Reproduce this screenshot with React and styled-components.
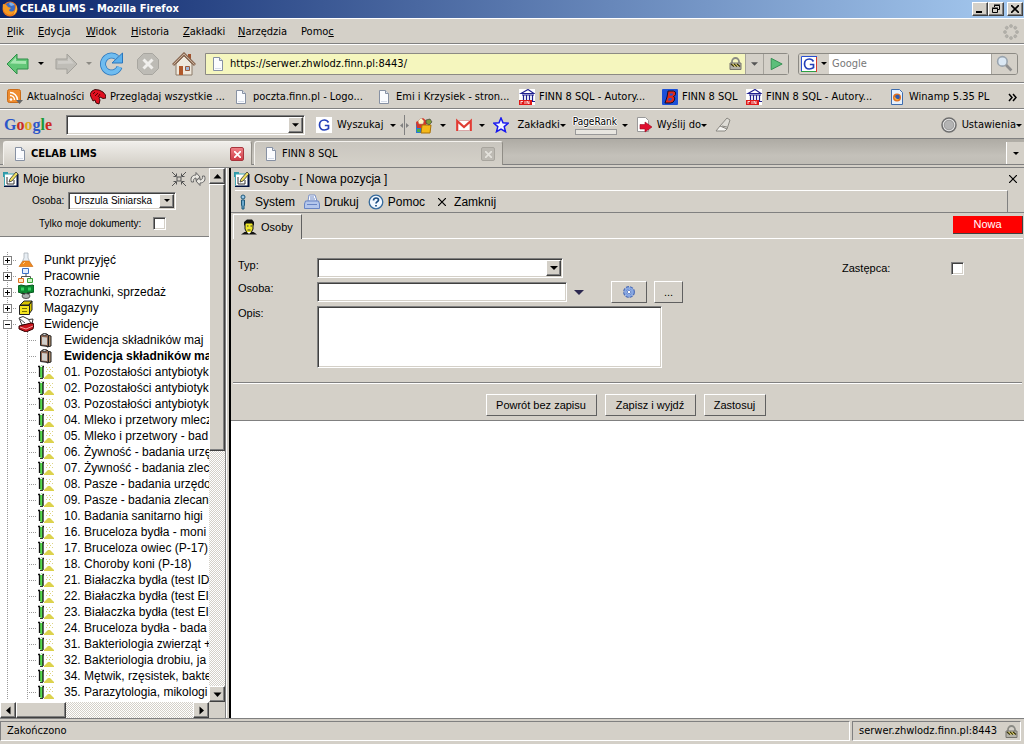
import React from "react";
import styled, { createGlobalStyle, css } from "styled-components";

const FACE = "#d4d0c8";
const UI_FONT = '"DejaVu Sans Condensed", "DejaVu Sans", sans-serif';
const APP_FONT = '"Liberation Sans", Arial, sans-serif';

const GlobalStyle = createGlobalStyle`
  * {
    box-sizing: border-box;
  }
  body {
    margin: 0;
    background: ${FACE};
    color: #000;
    font-family: ${UI_FONT};
    font-size: 11px;
    line-height: 14px;
  }
  button, input, select, textarea {
    font: inherit;
    color: inherit;
    margin: 0;
    padding: 0;
    border-radius: 0;
  }
  a {
    color: inherit;
    text-decoration: none;
  }
  svg {
    display: block;
    flex: none;
  }
`;

const sunken = css`
  border: 1px solid;
  border-color: #808080 #fff #fff #808080;
  box-shadow: inset 1px 1px 0 #404040, inset -1px -1px 0 ${FACE};
`;

const raised = css`
  border: 1px solid;
  border-color: #fff #404040 #404040 #fff;
  box-shadow: inset -1px -1px 0 #808080;
`;

const dots = "repeating-linear-gradient(#999 0 1px, transparent 1px 2px)";
const dotsX = "repeating-linear-gradient(90deg, #999 0 1px, transparent 1px 2px)";

/* ---------- window chrome ---------- */

const Window = styled.div`
  display: flex;
  flex-direction: column;
  height: 100vh;
  overflow: hidden;
`;

const TitleBar = styled.header`
  display: flex;
  align-items: center;
  gap: 2px;
  height: 18px;
  padding: 0 1px 0 2px;
  flex: none;
  color: #fff;
  font-weight: bold;
  background: linear-gradient(90deg, #0a246a, #a6caf0);
  h1 {
    flex: 1;
    margin: 0;
    font-size: 11px;
  }
`;

const CaptionButton = styled.button`
  ${raised}
  display: flex;
  align-items: center;
  justify-content: center;
  width: 16px;
  height: 14px;
  background: ${FACE};
  margin-left: ${(p) => (p.$apart ? "1px" : "-2px")};
`;

const Bar = styled.div`
  display: flex;
  align-items: center;
  flex: none;
  height: ${(p) => p.$height}px;
  padding: ${(p) => p.$pad || "0 7px"};
  border-top: 1px solid #fff;
  border-bottom: 1px solid #808080;
  white-space: nowrap;
  overflow: hidden;
`;

const MenuItem = styled.button`
  border: 0;
  background: none;
  text-align: left;
  width: ${(p) => p.$width}px;
`;

const Spacer = styled.span`
  flex: 1;
`;

const ToolButton = styled.button`
  display: flex;
  align-items: center;
  border: 0;
  background: none;
  gap: ${(p) => p.$gap || 0}px;
  margin-right: ${(p) => p.$after || 0}px;
`;

const UrlBox = styled.div`
  display: flex;
  flex: 1;
  height: 22px;
  border: 1px solid #8c8a84;
  border-radius: 0 3px 3px 0;
  margin-right: 9px;
`;

const UrlField = styled.label`
  display: flex;
  align-items: center;
  flex: 1;
  gap: 4px;
  padding: 0 3px 0 4px;
  background: #f5f6be;
  input {
    flex: 1;
    border: 0;
    background: none;
    outline: 0;
  }
`;

const FieldButton = styled.button`
  display: flex;
  align-items: center;
  justify-content: center;
  gap: 4px;
  border: 0;
  border-left: ${(p) => (p.$first ? "0" : "1px solid #a5a29b")};
  background: ${FACE};
  width: ${(p) => p.$width}px;
`;

const SearchBox = styled.div`
  display: flex;
  width: 220px;
  height: 22px;
  border: 1px solid #8c8a84;
  border-radius: 3px;
  overflow: hidden;
  input {
    flex: 1;
    min-width: 0;
    border: 0;
    padding: 0 3px;
    background: #fff;
  }
  input::placeholder {
    color: #777;
    opacity: 1;
  }
`;

const Bookmark = styled.a`
  display: flex;
  align-items: center;
  gap: 4px;
  width: ${(p) => p.$width}px;
`;

const GoogleLogo = styled.span`
  width: 62px;
  font: bold 16px/20px "Liberation Serif", serif;
  b:nth-child(1), b:nth-child(4) { color: #2c56c8; }
  b:nth-child(2), b:nth-child(6) { color: #cc2a22; }
  b:nth-child(3) { color: #e0a818; }
  b:nth-child(5) { color: #1a9a38; }
`;

const ComboBox = styled.div`
  ${sunken}
  display: grid;
  align-items: stretch;
  width: ${(p) => p.$width}px;
  height: ${(p) => p.$height}px;
  margin-right: ${(p) => p.$after || 0}px;
  padding: 1px;
  background: #fff;
  > select, > input {
    grid-area: 1 / 1;
    min-width: 0;
    width: 100%;
    border: 0;
    outline: 0;
    padding: 0 20px 0 4px;
    background: none;
    appearance: none;
  }
`;

const ComboArrow = styled.span`
  ${raised}
  grid-area: 1 / 1;
  justify-self: end;
  display: flex;
  align-items: center;
  justify-content: center;
  width: 15px;
  background: ${FACE};
  pointer-events: none;
`;

const PageRank = styled.span`
  display: flex;
  flex-direction: column;
  gap: 2px;
  width: 46px;
  margin-right: 3px;
  font: 10px/11px "DejaVu Sans Condensed", sans-serif;
  text-shadow: 1px 0 #fff, -1px 0 #fff, 0 1px #fff, 0 -1px #fff;
  &::after {
    content: "";
    width: 40px;
    height: 4px;
    margin-left: 2px;
    border: 1px solid #999;
    background: #e8e6e0;
  }
`;

const Grip = styled.span`
  display: flex;
  align-items: center;
  gap: 1px;
  height: 20px;
  margin-right: 6px;
  i {
    width: 1px;
    height: 20px;
    background: #808080;
  }
`;

const TabStrip = styled.nav`
  display: flex;
  align-items: flex-end;
  flex: none;
  height: 29px;
  padding: 2px 0 0 3px;
  background: linear-gradient(#aeaba4, #c4c1ba 60%, #bebbb4);
  border-bottom: 1px solid #808080;
  box-shadow: inset 0 -2px 0 ${FACE}, inset 0 -3px 0 #808080;
`;

const BrowserTab = styled.div`
  display: flex;
  align-items: center;
  gap: 3px;
  width: 249px;
  height: 24px;
  margin: 0 2px 2px 0;
  padding: 1px 7px 0 8px;
  border: 1px solid #f4f2ee;
  border-right-color: #908d86;
  border-bottom: 0;
  border-radius: 3px 3px 0 0;
  background: ${(p) => (p.$active ? `linear-gradient(#f0eeea, ${FACE})` : "linear-gradient(#c9c6bf, #d4d0c8)")};
  font-weight: ${(p) => (p.$active ? "bold" : "normal")};
  a {
    flex: 1;
  }
`;

const TabClose = styled.button`
  display: flex;
  align-items: center;
  justify-content: center;
  width: 14px;
  height: 14px;
  border: 1px solid ${(p) => (p.$active ? "#a8343c" : "#a8a59e")};
  border-radius: 2px;
  background: ${(p) => (p.$active ? "linear-gradient(#ef8086, #cf3c46)" : "#bdbab3")};
`;

const AllTabs = styled.button`
  display: flex;
  align-items: center;
  justify-content: center;
  width: 18px;
  height: 22px;
  margin-bottom: 3px;
  border: 0;
  border-left: 1px solid #fff;
  background: ${FACE};
`;

/* ---------- page ---------- */

const Content = styled.div`
  display: flex;
  flex: 1;
  min-height: 0;
  font-family: ${APP_FONT};
  font-size: 12px;
`;

const Sidebar = styled.aside`
  display: grid;
  grid-template-columns: minmax(0, 1fr) 16px;
  grid-template-rows: minmax(0, 1fr) 16px;
  width: 225px;
  flex: none;
`;

const Splitter = styled.div`
  width: 6px;
  flex: none;
  background: ${FACE};
  border-left: 1px solid #808080;
  border-right: 2px solid #000;
  box-shadow: inset 1px 0 0 #fff;
`;

const SidePane = styled.div`
  overflow: hidden;
  background: #fff;
`;

const DeskHeader = styled.div`
  height: 69px;
  background: ${FACE};
  border-bottom: 1px solid #808080;
  font-size: 10px;
`;

const DeskTitle = styled.div`
  display: flex;
  align-items: center;
  gap: 4px;
  height: 22px;
  padding: 0 3px;
  font-size: 12px;
`;

const DeskField = styled.label`
  display: flex;
  align-items: center;
  gap: ${(p) => p.$gap}px;
  height: ${(p) => p.$height}px;
  padding-left: ${(p) => p.$indent}px;
`;

const CheckBox = styled.input.attrs({ type: "checkbox" })`
  ${sunken}
  appearance: none;
  width: 13px;
  height: 13px;
  background: #fff;
`;

const Tree = styled.ul`
  list-style: none;
  margin: 0;
  padding: 15px 0 0;
`;

const TreeRow = styled.li`
  display: flex;
  align-items: center;
  height: 16px;
  padding-left: 3px;
  white-space: nowrap;
  font-weight: ${(p) => (p.$bold ? "bold" : "normal")};
  a {
    margin-left: 10px;
  }
`;

const Branch = styled.span`
  display: flex;
  align-items: center;
  flex: none;
  width: ${(p) => p.$width}px;
  height: 16px;
  background: ${(p) => (p.$through ? "" : `${dotsX} 4px 8px / 9px 1px no-repeat, `)} ${dots} 4px 0 / 1px 100% no-repeat;
`;

const Toggle = styled.button`
  display: flex;
  align-items: center;
  justify-content: center;
  width: 9px;
  height: 9px;
  border: 1px solid #808080;
  background: #fff;
`;

const ScrollTrack = styled.div`
  display: flex;
  flex-direction: ${(p) => (p.$vertical ? "column" : "row")};
  justify-content: space-between;
  background: repeating-conic-gradient(#fff 0 25%, ${FACE} 0 50%) 0 0 / 2px 2px;
`;

const ScrollButton = styled.button`
  ${raised}
  display: flex;
  align-items: center;
  justify-content: center;
  width: 16px;
  height: 16px;
  flex: none;
  background: ${FACE};
`;

const Thumb = styled.div`
  ${raised}
  background: ${FACE};
  flex: 0 0 ${(p) => p.$size};
  margin: ${(p) => (p.$vertical ? "0 0 auto" : "0 auto 0 0")};
`;

const Main = styled.main`
  flex: 1;
  min-width: 0;
  background: #fff;
`;

const Form = styled.form`
  background: ${FACE};
  border-bottom: 1px solid #808080;
`;

const FormTitle = styled.div`
  display: flex;
  align-items: center;
  gap: 4px;
  height: 21px;
  padding: 1px 7px 0 3px;
`;

const CloseX = styled.button`
  border: 0;
  background: none;
`;

const Commands = styled.div`
  display: flex;
  align-items: center;
  height: 24px;
  padding: 1px 16px 0 4px;
  border-bottom: 1px solid #808080;
  > div {
    display: flex;
    align-items: center;
    flex: 1;
    gap: 9px;
    height: 23px;
    border-top: 1px solid #fff;
    border-right: 1px solid #808080;
  }
`;

const Command = styled.button`
  display: flex;
  align-items: center;
  gap: ${(p) => p.$gap || 4}px;
  margin-left: ${(p) => p.$before || 0}px;
  border: 0;
  background: none;
`;

const FormTabs = styled.div`
  display: flex;
  align-items: stretch;
  height: 26px;
  padding: 1px 1px 0 2px;
`;

const FormTab = styled.button`
  display: flex;
  align-items: center;
  gap: 4px;
  width: 69px;
  padding: 0 0 0 7px;
  border: 1px solid #fff;
  border-right: 1px solid #606060;
  border-bottom: 0;
  background: none;
  font-size: 11px;
`;

const TabRest = styled.div`
  display: flex;
  justify-content: flex-end;
  align-items: flex-start;
  flex: 1;
  padding-top: 2px;
  border-bottom: 1px solid #fff;
`;

const StateBadge = styled.strong`
  width: 70px;
  height: 18px;
  border-right: 1px solid #404040;
  border-bottom: 1px solid #404040;
  background: #f00;
  color: #fff;
  font-size: 11px;
  font-weight: normal;
  line-height: 17px;
  text-align: center;
`;

const Fields = styled.div`
  display: grid;
  grid-template-columns: 79px minmax(0, 1fr);
  row-gap: 3px;
  padding: 19px 60px 14px 7px;
  font-size: 11px;
`;

const FieldRow = styled.div`
  display: flex;
  align-items: center;
  gap: 7px;
  min-height: 20px;
`;

const CheckLabel = styled.label`
  width: 102px;
  margin-left: auto;
`;

const TextBox = styled.input`
  ${sunken}
  width: 250px;
  height: 20px;
  padding: 0 4px;
  background: #fff;
`;

const TextArea = styled.textarea`
  ${sunken}
  display: block;
  width: 345px;
  height: 62px;
  background: #fff;
  resize: none;
`;

const PushButton = styled.button`
  display: flex;
  align-items: center;
  justify-content: center;
  width: ${(p) => p.$width}px;
  height: 22px;
  border: 1px solid;
  border-color: #fff #606060 #606060 #fff;
  background: ${FACE};
`;

const Lookup = styled.button`
  display: flex;
  border: 0;
  background: none;
  margin-right: 20px;
`;

const Actions = styled.div`
  display: flex;
  justify-content: center;
  gap: 8px;
  margin: 0 2px;
  padding: 11px 4px 4px 0;
  border-top: 1px solid #808080;
  box-shadow: inset 0 1px 0 #fff;
  font-size: 11px;
`;

const StatusBar = styled.footer`
  display: flex;
  align-items: center;
  gap: 2px;
  flex: none;
  height: 26px;
  padding: 2px 3px 3px 0;
  border-top: 1px solid #808080;
`;

const StatusCell = styled.div`
  display: flex;
  align-items: center;
  justify-content: space-between;
  flex: ${(p) => (p.$width ? `0 0 ${p.$width}px` : 1)};
  height: 20px;
  padding: 0 2px 0 6px;
  border: 1px solid;
  border-color: #808080 #fff #fff #808080;
`;

/* ---------- icons ---------- */

const Svg = ({ size = 16, w, h, box = "0 0 16 16", children }) => (
  <svg width={w || size} height={h || size} viewBox={box} fill="none" aria-hidden="true">
    {children}
  </svg>
);

const Caret = ({ color = "#000", size = 6 }) => (
  <Svg w={size} h={Math.ceil(size / 2)} box="0 0 10 5">
    <path d="M0 0h10L5 5z" fill={color} />
  </Svg>
);

const Arrow = ({ turn }) => (
  <Svg size={9} box="0 0 9 9">
    <path d="M0.500 6.500h8L4.500 2z" fill="#000" transform={`rotate(${turn} 4.500 4.500)`} />
  </Svg>
);

const PageIcon = () => (
  <Svg>
    <path d="M3.500 1.500h6l3 3v10h-9z" fill="#fbfcff" stroke="#8791a3" />
    <path d="M9.500 1.500v3h3" fill="#dfe5ef" stroke="#8791a3" />
    <path d="M5 12.500h6" stroke="#d4dbe8" />
  </Svg>
);

const FirefoxIcon = () => (
  <Svg>
    <circle cx="8" cy="8" r="7.500" fill="#e8731a" />
    <circle cx="8" cy="6.500" r="5" fill="#3c6cc4" />
    <path d="M8 1.500c2 0 3.500 1 4.500 2.500L9 5 7 3z" fill="#7fb2ec" />
    <path d="M1 3c2 0 4 1 5 3l3 1-2 2c1 2 4 2 6 0-1 4-4 5.500-7 4.500C2 12 0 8 1 3z" fill="#f49a24" />
    <path d="M14 4c1.500 3 1 8-3 10 2-3 3-6 3-10z" fill="#ffd24a" />
  </Svg>
);

const NavArrow = ({ forward }) => (
  <Svg size={24} box="0 0 24 24">
    <g transform={forward ? "matrix(-1 0 0 1 24 0)" : undefined}>
      <path
        d="M1 12 11 2v5h11v10H11v5z"
        fill={forward ? "#bfbdb7" : "#63c778"}
        stroke={forward ? "#a3a19b" : "#2f8f48"}
        strokeLinejoin="round"
      />
      <path d="M4 11.500 10 5v4h10v3z" fill={forward ? "#cfcdc8" : "#a6e6b0"} />
    </g>
  </Svg>
);

const ReloadIcon = () => (
  <Svg size={24} box="0 0 24 24">
    <path d="M19.500 15A8.500 8.500 0 1 1 17 5.500" stroke="#2a76bd" strokeWidth="6" />
    <path d="M19.500 15A8.500 8.500 0 1 1 17 5.500" stroke="#6fbcf0" strokeWidth="4.400" />
    <path d="M22.500 1v10H12z" fill="#5cb0ec" stroke="#2a76bd" strokeLinejoin="round" />
  </Svg>
);

const StopIcon = () => (
  <Svg size={24} box="0 0 24 24">
    <path d="M7.500 1.500h9l6 6v9l-6 6h-9l-6-6v-9z" fill="#bdbbb5" stroke="#a8a6a0" />
    <path d="m7.500 7.500 9 9m0-9-9 9" stroke="#f0efec" strokeWidth="3" />
  </Svg>
);

const HomeIcon = () => (
  <Svg size={24} box="0 0 24 24">
    <path d="M16 2h3v6h-3z" fill="#a0522d" />
    <path d="M4 12v11h16V12l-8-8z" fill="#efe8dc" stroke="#8c7a68" />
    <path d="M1 13 12 2l11 11" stroke="#8b6a54" strokeWidth="3" />
    <path d="M1.500 12.500 12 2l10.500 10.500" stroke="#c9b09a" />
    <path d="M7 14h4v9H7z" fill="#b0582a" />
    <path d="M13.500 14.500h4v4h-4z" fill="#9db6d8" stroke="#9a5a3a" />
  </Svg>
);

const LockIcon = () => (
  <Svg size={13} box="0 0 13 13">
    <path d="M3 7V4.500a3.500 3.500 0 0 1 7 0V7" stroke="#8a8a84" strokeWidth="1.800" />
    <path d="M1 6h11v6.500H1z" fill="#b4b2a8" stroke="#77756e" />
    <path d="m2 7 3 2.500M5 7l3 2.500M8 7l3 2.500" stroke="#3a3410" strokeWidth="1.500" />
    <path d="m3.500 7 3 2.500m0-2.500 3 2.500" stroke="#e8d850" />
  </Svg>
);

const GoIcon = () => (
  <Svg size={14}>
    <path d="M2.500 1.500v13L15 8z" fill="#5cbf7a" stroke="#2c8a4c" strokeLinejoin="round" />
  </Svg>
);

const GIcon = ({ plain }) => (
  <Svg>
    <path d="M0 0h16v16H0z" fill="#fff" />
    {!plain && (
      <>
        <path d="M.5 16V.5H16" stroke="#2a4fd0" />
        <path d="M15.500 1v15" stroke="#d83a2c" />
        <path d="M0 15.500h15" stroke="#2ea043" />
      </>
    )}
    <path d="M12.500 5.500C11.500 3.500 10 3 8.300 3 5.500 3 3.500 5.200 3.500 8s2 5 4.800 5c1.700 0 3.200-.5 4.200-1.300V8.500H8.800" stroke="#2440b8" strokeWidth="1.700" />
  </Svg>
);

const SearchIcon = () => (
  <Svg size={17}>
    <circle cx="6" cy="6" r="4.500" fill="#dbe8f4" stroke="#9aa4ae" strokeWidth="1.500" />
    <path d="m9.500 9.500 5 5" stroke="#8e8e8e" strokeWidth="2.600" />
  </Svg>
);

const ThrobberIcon = () => (
  <Svg>
    {[0, 45, 90, 135, 180, 225, 270, 315].map((a) => (
      <circle key={a} cx="8" cy="2" r="1.500" fill="#b4b2ac" stroke="#a09e98" strokeWidth=".5" transform={`rotate(${a} 8 8)`} />
    ))}
  </Svg>
);

const RssIcon = () => (
  <Svg>
    <rect x=".5" y=".5" width="13" height="13" rx="2" fill="#ee8c30" stroke="#c96c1a" />
    <circle cx="4" cy="10.500" r="1.300" fill="#fff" />
    <path d="M3 6.500a4.500 4.500 0 0 1 4.500 4.500M3 3.500a7.500 7.500 0 0 1 7.500 7.500" stroke="#fff" strokeWidth="1.500" />
    <path d="M9 11h7l-3.500 4z" fill="#666" />
  </Svg>
);

const RedHeadIcon = () => (
  <Svg>
    <path d="m0 5 2-3 3-1.500 4 .5 4 2 2.500 3 .5 3-3 .5-3-1.500-1 1 1 2-1 4-3-1-1-3-2 1-2-4z" fill="#e01020" stroke="#300" strokeWidth=".9" />
    <path d="m3 5 2-2m0 4 3-3m0 4 2-3" stroke="#500" />
  </Svg>
);

const FinnIcon = () => (
  <Svg>
    <path d="M0 0h16v16H0z" fill="#fff" />
    <path d="m2 4.500 7-4 6 4zM3 6h12M4.500 6v6m3-6v6m3-6v6m3-6v6M2 12.500h14" stroke="#202090" strokeWidth="1.200" />
    <path d="M0 11h13v5H0z" fill="#e01818" />
    <path d="M2 12.500h2M2 12v3m4-3v3m2 0v-3l2 3v-3" stroke="#fff" strokeWidth=".8" />
  </Svg>
);

const BlueBIcon = () => (
  <Svg>
    <rect width="16" height="16" rx="1" fill="#1c50d8" />
    <path d="M6 2h5.500q3 .5 2 3.500-.5 1.500-2 2 2 1 1 3.500-1 3-4 3H3l1-3 1-3z" fill="#e02818" stroke="#101030" />
    <path d="M8 4.500h3l-.5 2H7.500zM6.800 9h3l-.6 2.500H6z" fill="#1c50d8" />
  </Svg>
);

const WinampIcon = () => (
  <Svg>
    <path d="M2.500.5h8l3 3v12h-11z" fill="#e6f0fc" stroke="#3e6cae" />
    <circle cx="8" cy="8.500" r="4" fill="#e07020" />
    <circle cx="8.500" cy="8" r="2.300" fill="#2e5cb0" />
    <path d="M5 8c2 0 2 3 5 2-1 2-4 2-5-2z" fill="#f6b040" />
  </Svg>
);

const NewsIcon = () => (
  <Svg w={18} h={17} box="0 0 18 17">
    <path d="M1 6h8v10H1z" fill="#2878d8" />
    <path d="M1 5 8 1l5 4-4 6H2z" fill="#d83828" />
    <path d="m3 4 3-3 3 3-1 3H4z" fill="#fff4c0" stroke="#a88" strokeWidth=".5" />
    <path d="M7 8h9l-1 8H6z" fill="#f4b818" stroke="#a87008" />
    <path d="m11 3 4-1 2 3-3 3-3-2z" fill="#7d9c3a" stroke="#444" strokeWidth=".7" />
    <path d="M2 12h3v3H2z" fill="#48b048" />
  </Svg>
);

const GmailIcon = () => (
  <Svg>
    <path d="M0 3h16v11H0z" fill="#fff" />
    <path d="M1.200 14V4L8 10l6.800-6v10" stroke="#e03c34" strokeWidth="2.200" />
    <path d="M2 13.500h12M2 3.500h12" stroke="#d8a8a8" />
  </Svg>
);

const StarIcon = () => (
  <Svg>
    <path d="m8 1 2 4.800 5.200.4-4 3.400 1.300 5.100L8 12l-4.500 2.700 1.300-5.100-4-3.400L6 5.800z" fill="#f4f6ff" stroke="#1818f0" strokeWidth="1.500" />
  </Svg>
);

const SendIcon = () => (
  <Svg>
    <path d="M1.500.5h8l3 3v11h-11z" fill="#fff" stroke="#999" />
    <path d="M4 7.500h5V5l7 5-7 5v-3H4z" fill="#e01030" stroke="#a00820" strokeWidth=".6" />
  </Svg>
);

const MarkerIcon = () => (
  <Svg>
    <path d="m5 9 7-8 3 2-3 9-6 1z" fill="#dedcd6" stroke="#8a8882" />
    <path d="m5 9-4 5h9l2-2z" fill="#f4f3f0" stroke="#8a8882" />
    <path d="m7 9 5 1" stroke="#8a8882" />
  </Svg>
);

const KnobIcon = () => (
  <Svg>
    <circle cx="8" cy="8" r="7" fill="#e8e8e8" stroke="#6e6e6e" strokeWidth="1.500" />
    <circle cx="8" cy="8" r="4.800" fill="#b4b4b4" stroke="#999" />
  </Svg>
);

const EditIcon = () => (
  <Svg>
    <path d="M0 1h5v5H0z" fill="#2f98a8" />
    <path d="M2 3h12v12.500H2z" fill="#fff" />
    <path d="M14.500 3v12.500H1" stroke="#00103c" strokeWidth="2" />
    <path d="M1.500 15V3H12" stroke="#3fa8b4" />
    <path d="M4 6v7h7V9" stroke="#333" />
    <path d="m6 11 1-3 6-7 2 2-6 7z" fill="#f0e060" stroke="#333" strokeWidth=".8" />
  </Svg>
);

const CollapseIcon = () => (
  <Svg size={14} box="0 0 14 14">
    <path d="M5 5h4v4H5zM0 0l4 4m10-4-4 4M0 14l4-4m10 4-4-4" stroke="#555" />
    <path d="M4.500 1.500v3h-3m8-3v3h3m-11 5h3v3m8-3h-3v3" stroke="#555" />
  </Svg>
);

const RefreshIcon = () => (
  <Svg>
    <path d="M1.500 11C0 7 2 4 6 4V1.500L10 6 6 9.500V7C4 7 3 9 3.500 11z" fill="#e8e6e0" stroke="#666" />
    <path d="M14.500 5c1.500 4-.5 7-4.500 7v2.500L6 10l4-3.500V9c2 0 3-2 2.500-4z" fill="#e8e6e0" stroke="#666" />
  </Svg>
);

const FlaskIcon = () => (
  <Svg>
    <path d="M6 1h4v5l4 8H2l4-8z" fill="#e8eef4" stroke="#a8b0b8" strokeWidth=".8" />
    <path d="M5 9h6l4 5.500H1z" fill="#f08a20" stroke="#d06c10" strokeWidth=".6" />
    <path d="m5 12 2-2" stroke="#ffd090" />
  </Svg>
);

const LabsIcon = () => (
  <Svg>
    <path d="M8 6v3M3.500 11V8.500h9V11" stroke="#555" />
    <path d="M4.500.5h6v5h-6z" fill="#e6f0ff" stroke="#3c70c8" />
    <path d="M.5 10.500h5v4h-5z" fill="#ffe4c0" stroke="#e07020" />
    <path d="M9.500 10.500h5v4h-5z" fill="#d0f4c8" stroke="#38a038" />
  </Svg>
);

const MoneyIcon = () => (
  <Svg>
    <path d="m0 2 3-1 5 1 7-1 1 1v6l-5 1-3 3-5-3-3-1z" fill="#0c8a30" stroke="#04541c" />
    <path d="M3 3.500h3v3H3zm7 0h3v3h-3z" fill="#38d060" />
    <ellipse cx="8" cy="12" rx="4" ry="2.500" fill="#aab0b0" stroke="#555" />
    <path d="m4 9 3 1m2-1 3 0" stroke="#222" />
  </Svg>
);

const BoxIcon = () => (
  <Svg>
    <path d="m2 5 4-4h8l-3 4zM11 5l3-4v9l-3 4z" fill="#d8c400" stroke="#222" />
    <path d="M1.500 5.500h10v9h-10z" fill="#f4e420" stroke="#222" />
    <path d="M4 8.500h5m-5 3h5" stroke="#777000" />
  </Svg>
);

const RecordsIcon = () => (
  <Svg>
    <path d="m1 2 4-1.500 6 3L15 3l-1 5-10 1z" fill="#fff" stroke="#222" strokeWidth=".9" />
    <path d="m2 3 5 4m3-4 3 4" stroke="#555" />
    <path d="m1 10 12-3 3 1-1 5-7 3-7-3z" fill="#c8141c" stroke="#300" />
    <path d="m2 11 6 2 7-3" stroke="#f4a0a0" />
  </Svg>
);

const ClipboardIcon = () => (
  <Svg>
    <path d="m9 3 4 1v10l-4 1z" fill="#b08c68" stroke="#222" />
    <path d="M2.500 3.500 5 2h4l1.500 1.500v11l-8-1z" fill="#8a6450" stroke="#222" />
    <path d="m4 5 5 .5V13l-5-.5z" fill="#d0ceca" />
    <path d="M5 1.500h3v2H5z" fill="#ccc" stroke="#333" strokeWidth=".7" />
  </Svg>
);

const SampleIcon = () => (
  <Svg>
    <path d="M2 3h3v10l-1.500 2L2 13z" fill="#58dc50" />
    <path d="M0 2.500h1.500V13M5 14V2.500h1" stroke="#111" strokeWidth="1.300" />
    <path d="M2 14.500h3" stroke="#333" />
    <path d="M3 1.500h1" stroke="#9ae890" />
    <path d="M6 15v-1l2-2 2-2h2l2 2 2 2v1z" fill="#dcd24c" />
    <path d="M8 3.500h1m2 0h1m2 0h1m-6 2h1m2 0h1m-5 2h1m2 0h1m2 0h1" stroke="#dcd480" />
  </Svg>
);

const PersonIcon = () => (
  <Svg>
    <circle cx="8" cy="3" r="2" fill="#9cc8e8" stroke="#1e5878" />
    <path d="M6.500 6h3v5.500h-.5V15H7v-3.500h-.5z" fill="#6ca8cc" stroke="#1e5878" />
  </Svg>
);

const PrinterIcon = () => (
  <Svg>
    <path d="M4 7 5 1h6l2 6z" fill="#fff" stroke="#7890c8" />
    <path d="M1.500 7h13l1 3v4.500H.5V10z" fill="#b4c6ec" stroke="#6884c4" />
    <path d="M3 10.500h10M6 3h4M6 5h5" stroke="#6884c4" />
  </Svg>
);

const HelpIcon = () => (
  <Svg>
    <circle cx="8" cy="8" r="6.800" fill="#f2f8ff" stroke="#356a9c" strokeWidth="1.300" />
    <path d="M5.500 6.500c0-3.500 5-3 5-.5 0 1.600-2.500 1.700-2.500 3.500M8 11v1.600" stroke="#174a80" strokeWidth="1.700" />
  </Svg>
);

const FaceIcon = () => (
  <Svg>
    <path d="M0 15.500 3.500 13h9l3.500 2.500z" fill="#111" />
    <path d="M4 4h8v6l-2 4H6l-2-4z" fill="#f0e828" stroke="#111" />
    <path d="M3 7V3l3-2.500h5L13 3v4l-2-3H5z" fill="#111" />
    <path d="M6 7h1.500m2 0H11m-4.500 4h3" stroke="#333" />
    <path d="m6 13 2 2 2-2z" fill="#fff" />
  </Svg>
);

const GearIcon = () => (
  <Svg size={14}>
    <circle cx="8" cy="8" r="5" fill="#a8c4f0" stroke="#4a6ab4" strokeWidth="3.600" strokeDasharray="3 1" />
    <circle cx="8" cy="8" r="4.500" stroke="#88a8e4" strokeWidth="2" />
    <circle cx="8" cy="8" r="2" fill="#fff" stroke="#5878c0" />
  </Svg>
);

const Cross = ({ color = "#000", size = 8, stroke = 1.2 }) => (
  <Svg size={size} box="0 0 8 8">
    <path d="m0 0 8 8m0-8L0 8" stroke={color} strokeWidth={stroke} />
  </Svg>
);

/* ---------- data ---------- */

const menus = [
  ["", "P", "lik", 31],
  ["", "E", "dycja", 48],
  ["", "W", "idok", 45],
  ["", "H", "istoria", 52],
  ["", "Z", "akładki", 55],
  ["", "N", "arzędzia", 63],
  ["Pomo", "c", "", 40],
];

const bookmarks = [
  { icon: RssIcon, title: "Aktualności", width: 83 },
  { icon: RedHeadIcon, title: "Przeglądaj wszystkie ...", width: 143 },
  { icon: PageIcon, title: "poczta.finn.pl - Logo...", width: 143 },
  { icon: PageIcon, title: "Emi i Krzysiek - stron...", width: 143 },
  { icon: FinnIcon, title: "FINN 8 SQL - Autory...", width: 143 },
  { icon: BlueBIcon, title: "FINN 8 SQL", width: 84 },
  { icon: FinnIcon, title: "FINN 8 SQL - Autory...", width: 143 },
  { icon: WinampIcon, title: "Winamp 5.35 PL", width: 110 },
];

const modules = [
  { icon: FlaskIcon, title: "Punkt przyjęć" },
  { icon: LabsIcon, title: "Pracownie" },
  { icon: MoneyIcon, title: "Rozrachunki, sprzedaż" },
  { icon: BoxIcon, title: "Magazyny" },
  { icon: RecordsIcon, title: "Ewidencje", open: true },
];

const records = [
  { icon: ClipboardIcon, title: "Ewidencja składników maj" },
  { icon: ClipboardIcon, title: "Ewidencja składników ma", bold: true },
  ...[
    "01. Pozostałości antybiotyk",
    "02. Pozostałości antybiotyk",
    "03. Pozostałości antybiotyk",
    "04. Mleko i przetwory mlecz",
    "05. Mleko i przetwory - bad",
    "06. Żywność - badania urzę",
    "07. Żywność - badania zlec",
    "08. Pasze - badania urzędo",
    "09. Pasze - badania zlecan",
    "10. Badania sanitarno higi",
    "16. Bruceloza bydła - moni",
    "17. Bruceloza owiec (P-17)",
    "18. Choroby koni (P-18)",
    "21. Białaczka bydła (test ID",
    "22. Białaczka bydła (test EI",
    "23. Białaczka bydła (test EI",
    "24. Bruceloza bydła - bada",
    "31. Bakteriologia zwierząt +",
    "32. Bakteriologia drobiu, ja",
    "34. Mętwik, rzęsistek, bakte",
    "35. Parazytologia, mikologi",
  ].map((title) => ({ icon: SampleIcon, title })),
];

/* ---------- sections ---------- */

function BrowserChrome() {
  return (
    <>
      <TitleBar>
        <FirefoxIcon />
        <h1>CELAB LIMS - Mozilla Firefox</h1>
        <CaptionButton aria-label="Minimalizuj" $apart>
          <Svg size={8} box="0 0 8 8"><path d="M0 7h6" stroke="#000" strokeWidth="2" /></Svg>
        </CaptionButton>
        <CaptionButton aria-label="Przywróć">
          <Svg size={10} box="0 0 10 10"><path d="M3.500 3V1.500h5v4H7M3 1h6M1.500 4.500h5v4h-5zM1 4h6" stroke="#000" /></Svg>
        </CaptionButton>
        <CaptionButton aria-label="Zamknij" $apart>
          <Cross stroke={1.6} />
        </CaptionButton>
      </TitleBar>

      <Bar $height={26} $pad="2px 5px 0 7px">
        {menus.map(([before, key, after, width]) => (
          <MenuItem key={before + key + after} $width={width}>{before}<u>{key}</u>{after}</MenuItem>
        ))}
        <Spacer />
        <ThrobberIcon />
      </Bar>

      <Bar $height={39} $pad="0 6px 0 6px">
        <ToolButton aria-label="Wstecz" $gap={8} $after={10}><NavArrow /><Caret /></ToolButton>
        <ToolButton aria-label="Do przodu" $gap={8} $after={8}><NavArrow forward /><Caret color="#8c8a84" /></ToolButton>
        <ToolButton aria-label="Odśwież" $after={12}><ReloadIcon /></ToolButton>
        <ToolButton aria-label="Zatrzymaj" $after={12}><StopIcon /></ToolButton>
        <ToolButton aria-label="Strona startowa" $after={9}><HomeIcon /></ToolButton>
        <UrlBox>
          <UrlField>
            <PageIcon />
            <input aria-label="Adres" defaultValue="https://serwer.zhwlodz.finn.pl:8443/" />
            <LockIcon />
          </UrlField>
          <FieldButton $width={18} aria-label="Historia adresów"><Caret size={7} color="#555" /></FieldButton>
          <FieldButton $width={25} aria-label="Przejdź"><GoIcon /></FieldButton>
        </UrlBox>
        <SearchBox>
          <FieldButton $first $width={30} aria-label="Wyszukiwarka"><GIcon /><Caret /></FieldButton>
          <input placeholder="Google" aria-label="Szukaj" />
          <FieldButton $width={26} aria-label="Szukaj"><SearchIcon /></FieldButton>
        </SearchBox>
      </Bar>

      <Bar $height={26} $pad="2px 7px 0 7px">
        {bookmarks.map(({ icon: Icon, title, width }, i) => (
          <Bookmark href="#" key={i} $width={width}><Icon />{title}</Bookmark>
        ))}
        <Spacer />
        <ToolButton aria-label="Więcej zakładek">
          <Svg size={9} box="0 0 9 9"><path d="m1 1 3 3.500L1 8m4-7 3 3.500L5 8" stroke="#000" strokeWidth="1.500" /></Svg>
        </ToolButton>
      </Bar>

      <Bar $height={30} $pad="2px 2px 0 4px">
        <GoogleLogo aria-label="Google"><b>G</b><b>o</b><b>o</b><b>g</b><b>l</b><b>e</b></GoogleLogo>
        <ComboBox $width={239} $height={20} $after={11}>
          <input aria-label="Szukaj w Google" />
          <ComboArrow><Caret size={7} /></ComboArrow>
        </ComboBox>
        <ToolButton $gap={5} $after={7}><GIcon plain />Wyszukaj</ToolButton>
        <ToolButton aria-label="Opcje wyszukiwania" $after={4}><Caret /></ToolButton>
        <Grip>
          <Svg w={3} h={5} box="0 0 3 5"><path d="M3 0v5L0 2.500z" fill="#808080" /></Svg>
          <i />
          <Svg w={3} h={5} box="0 0 3 5"><path d="M0 0v5l3-2.500z" fill="#808080" /></Svg>
        </Grip>
        <ToolButton aria-label="Wiadomości" $gap={7} $after={10}><NewsIcon /><Caret /></ToolButton>
        <ToolButton aria-label="Gmail" $gap={7} $after={8}><GmailIcon /><Caret /></ToolButton>
        <ToolButton $gap={8}><StarIcon />Zakładki</ToolButton>
        <ToolButton aria-label="Lista zakładek" $after={7}><Caret /></ToolButton>
        <PageRank>PageRank</PageRank>
        <ToolButton aria-label="Opcje PageRank" $after={8}><Caret /></ToolButton>
        <ToolButton $gap={5}><SendIcon />Wyślij do</ToolButton>
        <ToolButton aria-label="Opcje wysyłania" $after={8}><Caret /></ToolButton>
        <ToolButton aria-label="Zaznacz"><MarkerIcon /></ToolButton>
        <Spacer />
        <ToolButton $gap={5}><KnobIcon />Ustawienia</ToolButton>
        <Caret />
      </Bar>

      <TabStrip>
        <BrowserTab $active>
          <PageIcon />
          <a href="#">CELAB LIMS</a>
          <TabClose $active aria-label="Zamknij kartę"><Cross size={7} color="#fff" stroke={2} /></TabClose>
        </BrowserTab>
        <BrowserTab>
          <PageIcon />
          <a href="#">FINN 8 SQL</a>
          <TabClose aria-label="Zamknij kartę"><Cross size={7} color="#e4e2dc" stroke={2} /></TabClose>
        </BrowserTab>
        <Spacer />
        <AllTabs aria-label="Lista kart"><Caret /></AllTabs>
      </TabStrip>
    </>
  );
}

function Desk() {
  return (
    <Sidebar>
      <SidePane>
        <DeskHeader>
          <DeskTitle>
            <EditIcon />
            Moje biurko
            <Spacer />
            <ToolButton aria-label="Zwiń"><CollapseIcon /></ToolButton>
            <ToolButton aria-label="Odśwież"><RefreshIcon /></ToolButton>
          </DeskTitle>
          <DeskField $height={21} $indent={32} $gap={4}>
            Osoba:
            <ComboBox $width={108} $height={18}>
              <select><option>Urszula Siniarska</option></select>
              <ComboArrow><Caret /></ComboArrow>
            </ComboBox>
          </DeskField>
          <DeskField $height={25} $indent={39} $gap={12}>
            Tylko moje dokumenty:
            <CheckBox />
          </DeskField>
        </DeskHeader>
        <Tree>
          {modules.map(({ icon: Icon, title, open }) => (
            <TreeRow key={title}>
              <Branch $width={15}>
                <Toggle aria-label={title}>
                  <Svg size={5} box="0 0 5 5"><path d={open ? "M0 2.500h5" : "M0 2.500h5M2.500 0v5"} stroke="#000" /></Svg>
                </Toggle>
              </Branch>
              <Icon />
              <a href="#">{title}</a>
            </TreeRow>
          ))}
          {records.map(({ icon: Icon, title, bold }, i) => (
            <TreeRow key={i} $bold={bold}>
              <Branch $through $width={20} />
              <Branch $width={15} />
              <Icon />
              <a href="#">{title}</a>
            </TreeRow>
          ))}
        </Tree>
      </SidePane>
      <ScrollTrack $vertical>
        <ScrollButton aria-label="W górę"><Arrow turn={0} /></ScrollButton>
        <Thumb $vertical $size="50%" />
        <ScrollButton aria-label="W dół"><Arrow turn={180} /></ScrollButton>
      </ScrollTrack>
      <ScrollTrack>
        <ScrollButton aria-label="W lewo"><Arrow turn={-90} /></ScrollButton>
        <Thumb $size="24%" />
        <ScrollButton aria-label="W prawo"><Arrow turn={90} /></ScrollButton>
      </ScrollTrack>
    </Sidebar>
  );
}

function PersonForm() {
  return (
    <Form onSubmit={(e) => e.preventDefault()}>
      <FormTitle>
        <EditIcon />
        Osoby - [ Nowa pozycja ]
        <Spacer />
        <CloseX type="button" aria-label="Zamknij"><Cross /></CloseX>
      </FormTitle>
      <Commands>
        <div>
          <Command type="button"><PersonIcon />System</Command>
          <Command type="button"><PrinterIcon />Drukuj</Command>
          <Command type="button"><HelpIcon />Pomoc</Command>
          <Command type="button" $gap={8} $before={4}><Cross />Zamknij</Command>
        </div>
      </Commands>
      <FormTabs>
        <FormTab type="button"><FaceIcon />Osoby</FormTab>
        <TabRest><StateBadge>Nowa</StateBadge></TabRest>
      </FormTabs>
      <Fields>
        <label htmlFor="typ">Typ:</label>
        <FieldRow>
          <ComboBox $width={246} $height={20}>
            <select id="typ" />
            <ComboArrow><Caret size={8} /></ComboArrow>
          </ComboBox>
          <CheckLabel htmlFor="zastepca">Zastępca:</CheckLabel>
          <CheckBox id="zastepca" />
        </FieldRow>
        <label htmlFor="osoba">Osoba:</label>
        <FieldRow>
          <TextBox id="osoba" />
          <Lookup type="button" aria-label="Lista osób"><Caret size={10} color="#2c2850" /></Lookup>
          <PushButton type="button" $width={36} aria-label="Ustawienia"><GearIcon /></PushButton>
          <PushButton type="button" $width={29}>...</PushButton>
        </FieldRow>
        <label htmlFor="opis">Opis:</label>
        <TextArea id="opis" />
      </Fields>
      <Actions>
        <PushButton type="button" $width={111}>Powrót bez zapisu</PushButton>
        <PushButton $width={91}>Zapisz i wyjdź</PushButton>
        <PushButton type="button" $width={62}>Zastosuj</PushButton>
      </Actions>
    </Form>
  );
}

function App() {
  return (
    <Window>
      <GlobalStyle />
      <BrowserChrome />
      <Content>
        <Desk />
        <Splitter />
        <Main>
          <PersonForm />
        </Main>
      </Content>
      <StatusBar>
        <StatusCell>Zakończono</StatusCell>
        <StatusCell $width={169}>serwer.zhwlodz.finn.pl:8443<LockIcon /></StatusCell>
      </StatusBar>
    </Window>
  );
}

export default App;
